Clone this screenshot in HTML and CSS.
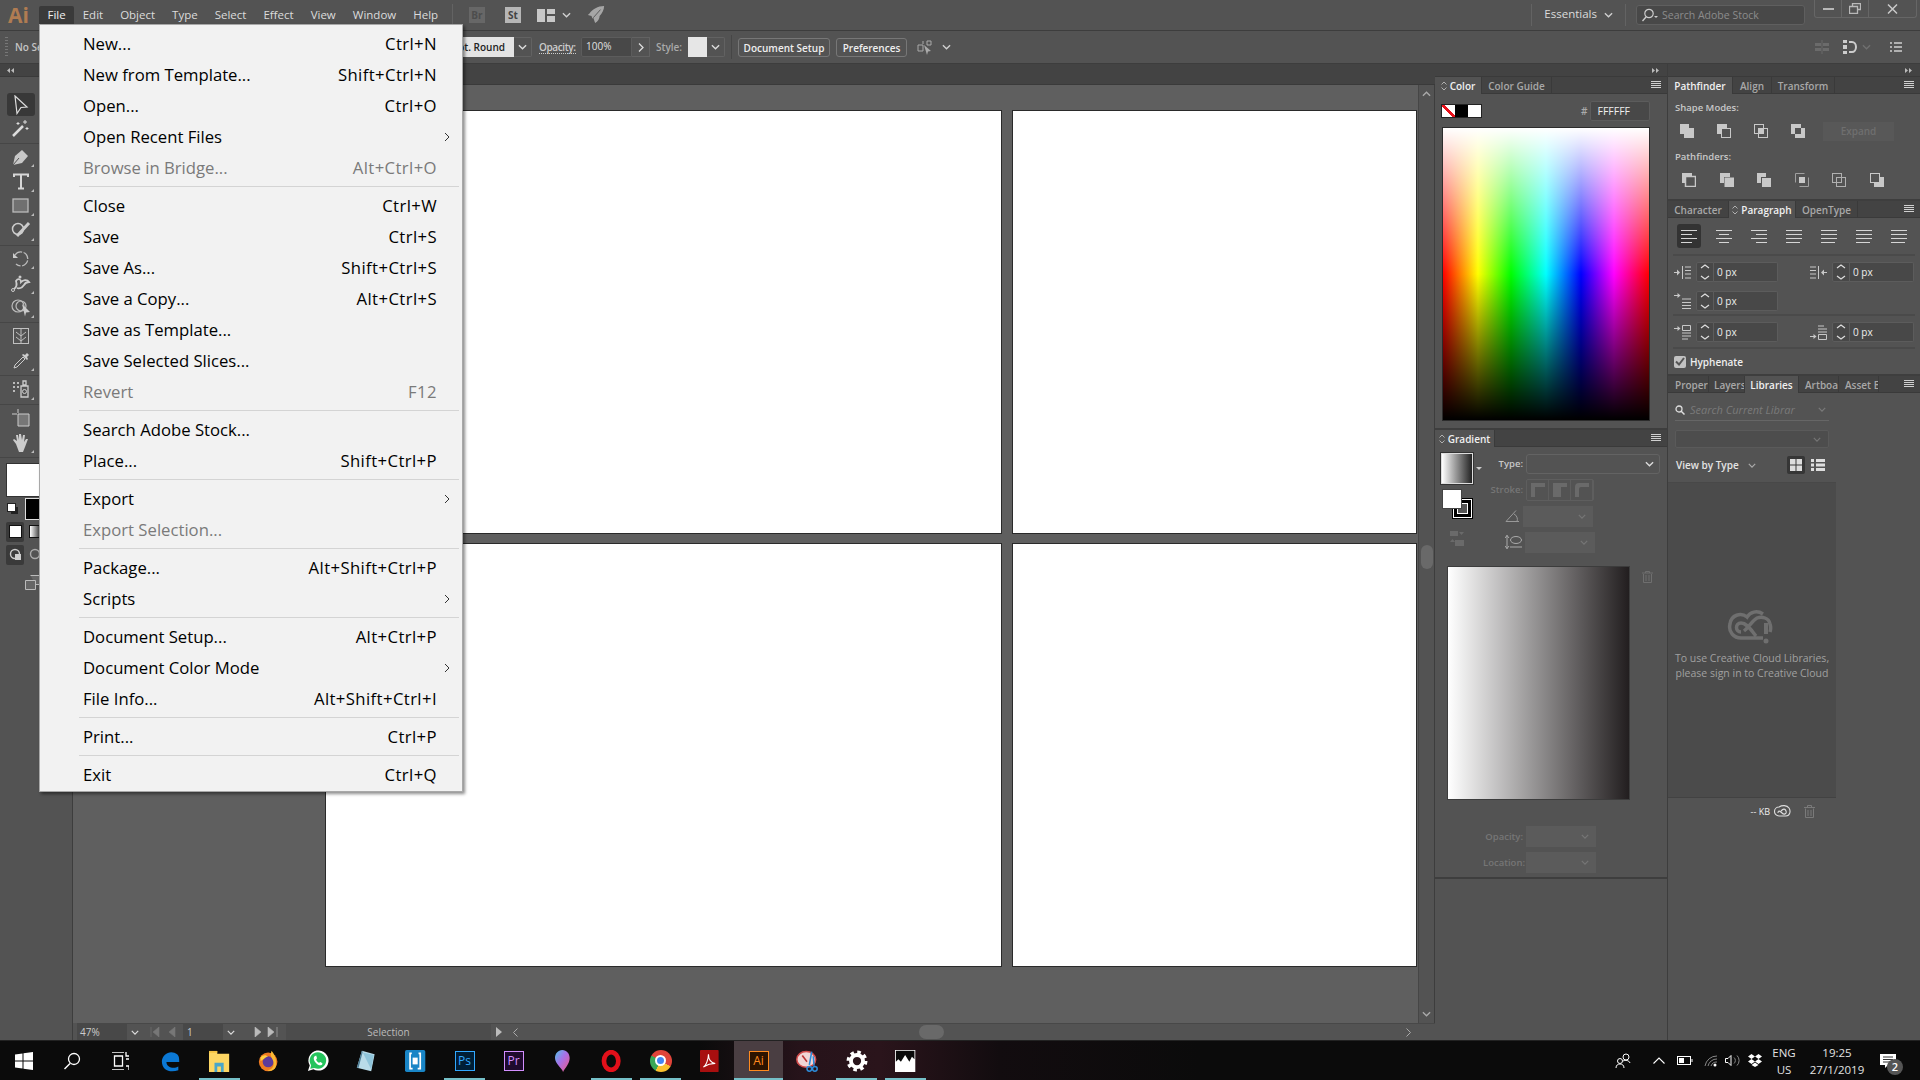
FILE: index.html
```html
<!DOCTYPE HTML>
<html>

<head>
    <meta charset="UTF-8">
    <title>Adobe Illustrator</title>
    <link rel="stylesheet" href="styles.css">
</head>

<body>
    <svg class="defs" width="0" height="0">
        <symbol id="chev" viewBox="0 0 10 6"><path d="M1 1l4 4 4-4" fill="none" stroke="currentColor" stroke-width="1.5"/></symbol>
        <symbol id="burger" viewBox="0 0 10 7"><path d="M0 .5h10M0 2.500h10M0 4.500h10M0 6.500h10" stroke="currentColor"/></symbol>
        <symbol id="updown" viewBox="0 0 6 10"><path d="M.5 3.500L3 1l2.500 2.500M.5 6.500L3 9l2.500-2.500" fill="none" stroke="currentColor"/></symbol>
        <symbol id="left" viewBox="0 0 16 13"><path d="M0 .5h16M0 4.500h11M0 8.500h16M0 12.500h11" stroke="currentColor"/></symbol>
        <symbol id="center" viewBox="0 0 16 13"><path d="M0 .5h16M3 4.500h10M0 8.500h16M3 12.500h10" stroke="currentColor"/></symbol>
        <symbol id="right" viewBox="0 0 16 13"><path d="M0 .5h16M5 4.500h11M0 8.500h16M5 12.500h11" stroke="currentColor"/></symbol>
        <symbol id="just" viewBox="0 0 16 13"><path d="M0 .5h16M0 4.500h16M0 8.500h16M0 12.500h14" stroke="currentColor"/></symbol>
        <symbol id="spin" viewBox="0 0 10 18"><path d="M1 5l4-3 4 3M1 13l4 3 4-3" fill="none" stroke="currentColor" stroke-width="1.2"/></symbol>
    </svg>

    <div class="app">
        <header class="menubar">
            <span class="ai-logo">Ai</span>
            <nav class="menubar__items">
                <span class="menubar__item menubar__item--open">File</span>
                <span class="menubar__item">Edit</span>
                <span class="menubar__item">Object</span>
                <span class="menubar__item">Type</span>
                <span class="menubar__item">Select</span>
                <span class="menubar__item">Effect</span>
                <span class="menubar__item">View</span>
                <span class="menubar__item">Window</span>
                <span class="menubar__item">Help</span>
            </nav>
            <span class="vsep"></span>
            <span class="badge badge--br">Br</span>
            <span class="badge badge--st">St</span>
            <svg class="layout-icon" width="18" height="13" viewBox="0 0 18 13"><path d="M0 0h8v13H0zM10 0h8v5h-8zM10 7h8v6h-8z" fill="#c8c8c8"/></svg>
            <svg class="small-chev" width="9" height="6"><use href="#chev"/></svg>
            <svg class="rocket" width="18" height="20" viewBox="0 0 20 22"><path d="M19 1C12 1 6 5 3 9l-2 2 4 1 1 3 1-1 2 6c3-2 5-5 5-8 3-3 5-7 5-11z" fill="#a6a6a6"/><path d="M7 14l8-9" stroke="#535353"/></svg>
            <span class="menubar__spacer"></span>
            <span class="vsep"></span>
            <span class="workspace">Essentials</span>
            <svg class="small-chev" width="9" height="6"><use href="#chev"/></svg>
            <span class="vsep vsep--ws"></span>
            <div class="stock-search">
                <svg width="18" height="14" viewBox="0 0 18 14"><circle cx="8" cy="5.500" r="4.200" fill="none" stroke="#ccc" stroke-width="1.200"/><path d="M5 9l-3.500 4" stroke="#ccc" stroke-width="1.300"/><path d="M13 8h4l-2 2z" fill="#ccc"/></svg>
                <span>Search Adobe Stock</span>
            </div>
            <div class="winbtns">
                <span class="winbtn"><svg width="11" height="3"><rect width="11" height="2" y="1" fill="#b8b8b8"/></svg></span>
                <span class="winbtn"><svg width="12" height="11" viewBox="0 0 12 11"><path d="M3.500 3V.5h8v6H9M.5 3.500h8v7h-8z" fill="none" stroke="#b8b8b8" stroke-width="1.300"/></svg></span>
                <span class="winbtn winbtn--wide"><svg width="11" height="10" viewBox="0 0 11 10"><path d="M1 .5l9 9M10 .5l-9 9" stroke="#c8c8c8" stroke-width="1.500"/></svg></span>
            </div>
        </header>

        <div class="optionsbar">
            <span class="grip"></span>
            <span class="opt-noselect">No Selection</span>
            <span class="opt-brush">3 pt. Round</span>
            <span class="opt-dd"><svg width="9" height="6"><use href="#chev"/></svg></span>
            <span class="opt-label">Opacity:</span>
            <span class="opt-input">100%</span>
            <span class="opt-arrow">
                <svg width="6" height="9" viewBox="0 0 6 9"><path d="M1 .5l4 4-4 4" fill="none" stroke="#ddd" stroke-width="1.300"/></svg>
            </span>
            <span class="opt-style">Style:</span>
            <span class="opt-swatch"></span>
            <span class="opt-dd opt-dd--style"><svg width="9" height="6"><use href="#chev"/></svg></span>
            <span class="opt-sep"></span>
            <span class="opt-btn opt-btn--setup">Document Setup</span>
            <span class="opt-btn opt-btn--prefs">Preferences</span>
            <svg class="opt-transform" width="18" height="15" viewBox="0 0 18 15"><path d="M6 1v3M10 1h4v4h-4zM1 5h5v6H1z" fill="none" stroke="#aaa"/><path d="M7 5l7 6-3 .5L10 15z" fill="#aaa"/></svg>
            <svg class="small-chev" width="9" height="6"><use href="#chev"/></svg>
            <span class="menubar__spacer"></span>
            <svg class="opt-align" width="14" height="14" viewBox="0 0 14 14"><path d="M0 3h6v3H0zM8 3h6v3H8zM0 8h6v3H0zM8 8h6v3H8z" fill="#6b6b6b"/><path d="M7 0v14" stroke="#6b6b6b"/></svg>
            <svg class="opt-snap" width="14" height="14" viewBox="0 0 14 14"><path d="M0 0h4v3H0zM0 5h4v4H0zM0 11h4v3H0z" fill="#ccc"/><path d="M6 2h3a4 5 0 0 1 0 10H6" fill="none" stroke="#ccc" stroke-width="2"/></svg>
            <svg class="opt-dim" width="9" height="6"><use href="#chev"/></svg>
            <svg class="opt-list" width="12" height="10" viewBox="0 0 12 10"><path d="M0 1h2M4 1h8M0 5h2M4 5h8M0 9h2M4 9h8" stroke="#d0d0d0" stroke-width="1.400"/></svg>
        </div>

        <div class="workspace-row">
            <aside class="toolbar">
                <div class="strip"><svg width="7" height="5" viewBox="0 0 7 5"><path d="M3 0v5L0 2.500zM7 0v5L4 2.500z" fill="#bbb"/></svg></div>
                <div class="tool-group">
                    <div class="tool tool--active"><svg width="16" height="20" viewBox="0 0 16 20"><path d="M2 1l12 11-6 .5-4 6z" fill="none" stroke="#ddd" stroke-width="1.200"/></svg></div>
                    <div class="tool"><svg width="18" height="18" viewBox="0 0 18 18"><path d="M1 17L11 7" stroke="#ddd" stroke-width="2.500"/><path d="M13 1v4M11 3h4M6 3v3M4.500 4.500h3M15 8v3M13.500 9.500h3" stroke="#ddd"/></svg></div>
                </div>
                <div class="tool-group">
                    <div class="tool tool--more"><svg width="18" height="18" viewBox="0 0 18 18"><path d="M1 17l2-9 7-6 6 6-6 7z" fill="#c8c8c8"/><path d="M1 17l6-7" stroke="#535353"/></svg></div>
                    <div class="tool tool--more"><svg width="16" height="17" viewBox="0 0 16 17"><path d="M1 4V1.500h14V4M8 1.500V15.500M5 15.500h6" fill="none" stroke="#d6d6d6" stroke-width="2"/></svg></div>
                    <div class="tool tool--more"><svg width="17" height="15" viewBox="0 0 17 15"><rect x="1" y="1" width="15" height="13" fill="#707070" stroke="#bbb" stroke-width="1.300"/></svg></div>
                    <div class="tool tool--more"><svg width="20" height="18" viewBox="0 0 20 18"><circle cx="7" cy="8" r="5.500" fill="none" stroke="#ccc" stroke-width="1.500"/><path d="M6 15L18 2" stroke="#ccc" stroke-width="3"/></svg></div>
                </div>
                <div class="tool-group">
                    <div class="tool tool--more"><svg width="18" height="18" viewBox="0 0 18 18"><path d="M3 5a7 7 0 1 1 1 9" fill="none" stroke="#bbb" stroke-dasharray="8 1.500" stroke-width="1.300"/><path d="M1 3v5h5z" fill="#ccc"/></svg></div>
                    <div class="tool tool--more"><svg width="20" height="18" viewBox="0 0 20 18"><path d="M3 15c3-2 3-5 2-8 2-3 5-2 5 1 2-2 6-3 8 0-2 0-4 1-5 3-2 3-5 4-7 3" fill="none" stroke="#ccc" stroke-width="1.800"/><circle cx="2" cy="16" r="1.500" fill="none" stroke="#ccc"/><circle cx="9" cy="3" r="1.500" fill="#ccc"/></svg></div>
                    <div class="tool tool--more"><svg width="20" height="20" viewBox="0 0 20 20"><ellipse cx="7" cy="8" rx="6" ry="6" fill="none" stroke="#bbb" stroke-width="1.200"/><ellipse cx="10" cy="8" rx="5" ry="5" fill="none" stroke="#bbb" stroke-width="1.200"/><path d="M11 6l8 8-4 .5-1 4z" fill="#ccc"/></svg></div>
                </div>
                <div class="tool-group">
                    <div class="tool"><svg width="16" height="16" viewBox="0 0 16 16"><rect x=".5" y=".5" width="15" height="15" fill="none" stroke="#c0c0c0"/><path d="M8 1v14M8 8l5-4M8 8L3 4M8 13l5-4M8 13L3 9" stroke="#c0c0c0"/></svg></div>
                    <div class="tool tool--more"><svg width="18" height="18" viewBox="0 0 18 18"><path d="M2 16l1-3L11 5l2 2-8 8z" fill="none" stroke="#ccc"/><path d="M10 3l5 5 1-1-1-2 2-2-2-2-2 2-2-1z" fill="#ccc"/></svg></div>
                </div>
                <div class="tool-group">
                    <div class="tool tool--more"><svg width="18" height="18" viewBox="0 0 18 18"><path d="M1 2h2v2H1zM5 2h2v2H5zM1 6h2v2H1zM5 6h2v2H5zM1 10h2v2H1z" fill="#bbb"/><path d="M9 6h7v11H9zM11 1h3v4h-3z" fill="none" stroke="#ccc" stroke-width="1.300"/><circle cx="12.500" cy="11.500" r="2" fill="none" stroke="#ccc"/></svg></div>
                </div>
                <div class="tool-group">
                    <div class="tool tool--artboard"><svg width="18" height="18" viewBox="0 0 18 18"><path d="M6 5h11v12H6z" fill="#777" stroke="#ccc"/><path d="M0 5h5M6 0v4" stroke="#ccc"/></svg></div>
                    <div class="tool tool--more"><svg width="18" height="19" viewBox="0 0 18 19"><path d="M4 11L1 7l1-1 3 2-1-6h2l1 5V1h2l1 6 1-5h2l-1 7 2-3h2l-3 8-2 5H7z" fill="#ccc"/></svg></div>
                </div>
                <div class="fillstroke">
                    <span class="fill-box"></span>
                    <span class="stroke-box"></span>
                    <span class="default-fs"></span>
                </div>
                <div class="mode-row">
                    <span class="mode-cell mode-cell--on"><i class="mode-white"></i></span>
                    <span class="mode-cell"><i class="mode-grad"></i></span>
                </div>
                <div class="mode-row">
                    <span class="mode-cell mode-cell--on"><svg width="13" height="13" viewBox="0 0 13 13"><circle cx="6" cy="6" r="4.500" fill="none" stroke="#ccc" stroke-width="1.400"/><rect x="6" y="6" width="6" height="6" fill="#ccc"/></svg></span>
                    <span class="mode-cell"><svg width="13" height="13" viewBox="0 0 13 13"><circle cx="6" cy="6" r="4.500" fill="none" stroke="#aaa" stroke-width="1.400"/></svg></span>
                </div>
                <div class="screen-mode">
                    <svg width="16" height="15" viewBox="0 0 16 15"><path d="M.5 5.500h10v9H.5zM5.500.5h10v9h-5" fill="#666" stroke="#bbb"/></svg>
                </div>
            </aside>

            <main class="document">
                <div class="doc-tabs"></div>
                <div class="doc-mid">
                    <div class="canvas">
                        <div class="artboards">
                            <div class="artboard"></div>
                            <div class="artboard"></div>
                            <div class="artboard"></div>
                            <div class="artboard"></div>
                        </div>
                    </div>
                    <div class="vscroll">
                        <svg width="9" height="6" class="vscroll__up"><use href="#chev"/></svg>
                        <span class="vscroll__thumb"></span>
                        <svg width="9" height="6"><use href="#chev"/></svg>
                    </div>
                </div>
                <div class="statusbar">
                    <span class="st-zoom">47%</span>
                    <span class="st-dd"><svg width="8" height="5"><use href="#chev"/></svg></span>
                    <svg class="st-nav st-nav--dim" width="30" height="10" viewBox="0 0 30 10"><path d="M1 0v10M9 0v10L3 5zM25 0v10l-6-5z" fill="#777" stroke="#777" stroke-width=".6"/></svg>
                    <span class="st-page">1</span>
                    <span class="st-dd"><svg width="8" height="5"><use href="#chev"/></svg></span>
                    <svg class="st-nav" width="30" height="10" viewBox="0 0 30 10"><path d="M6 0v10l6-5zM19 0v10l6-5zM28 0v10" fill="#bbb" stroke="#bbb" stroke-width=".6"/></svg>
                    <span class="st-label">Selection</span>
                    <svg class="st-play" width="6" height="10" viewBox="0 0 6 10"><path d="M0 0v10l6-5z" fill="#bbb"/></svg>
                    <svg class="st-back" width="5" height="9" viewBox="0 0 5 9"><path d="M4.500.5l-4 4 4 4" fill="none" stroke="#aaa"/></svg>
                    <div class="hscroll"><span class="hscroll__thumb"></span></div>
                    <svg class="st-fwd" width="5" height="9" viewBox="0 0 5 9"><path d="M.5.500l4 4-4 4" fill="none" stroke="#aaa"/></svg>
                </div>
            </main>

            <section class="dock dock--left">
                <div class="strip strip--right"><svg width="7" height="5" viewBox="0 0 7 5"><path d="M0 0v5l3-2.500zM4 0v5l3-2.500z" fill="#bbb"/></svg></div>
                <div class="panel panel--color">
                    <div class="tabs">
                        <span class="tab tab--on tab--color"><svg class="tab__updown" width="6" height="10"><use href="#updown"/></svg>Color</span>
                        <span class="tab tab--guide">Color Guide</span>
                        <svg class="tabs__menu" width="10" height="7"><use href="#burger"/></svg>
                    </div>
                    <div class="color-top">
                        <span class="swatch-set">
                            <i class="sw sw--none"></i><i class="sw sw--black"></i><i class="sw sw--white"></i>
                        </span>
                        <span class="hash">#</span>
                        <span class="hex">FFFFFF</span>
                    </div>
                    <div class="spectrum"></div>
                </div>
                <div class="panel panel--gradient">
                    <div class="tabs">
                        <span class="tab tab--on tab--gradient"><svg class="tab__updown" width="6" height="10"><use href="#updown"/></svg>Gradient</span>
                        <svg class="tabs__menu" width="10" height="7"><use href="#burger"/></svg>
                    </div>
                    <div class="grad-top">
                        <div class="grad-left">
                            <div class="grad-preview-row">
                                <span class="grad-preview"></span>
                                <i class="grad-caret"></i>
                            </div>
                            <div class="grad-fs">
                                <span class="grad-fs__stroke"></span>
                                <span class="grad-fs__fill"></span>
                            </div>
                            <svg class="grad-swap" width="16" height="15" viewBox="0 0 16 15"><path d="M1 0h8v5H1zM6 9h9v6H6z" fill="#6a6a6a"/><path d="M10 1h5l-2.500 3zM1 11h5L3.500 8z" fill="#6a6a6a"/></svg>
                        </div>
                        <div class="grad-form">
                            <div class="grad-row grad-row--type">
                                <label class="grad-label grad-label--on">Type:</label>
                                <span class="grad-select"><svg width="9" height="6"><use href="#chev"/></svg></span>
                            </div>
                            <div class="grad-row grad-row--stroke">
                                <label class="grad-label">Stroke:</label>
                                <span class="grad-strokes">
                                    <i><svg width="14" height="14" viewBox="0 0 14 14"><path d="M0 14V0h14v4H4v10z" fill="#6a6a6a"/></svg></i>
                                    <i><svg width="14" height="14" viewBox="0 0 14 14"><path d="M0 14V0h14v4H8v10z" fill="#6a6a6a"/></svg></i>
                                    <i><svg width="14" height="14" viewBox="0 0 14 14"><path d="M0 14V4a4 4 0 0 1 4-4h10v4H6a2 2 0 0 0-2 2v8z" fill="#6a6a6a"/></svg></i>
                                </span>
                            </div>
                            <div class="grad-row">
                                <svg class="grad-ico" width="15" height="12" viewBox="0 0 15 12"><path d="M1 11.500h13M1 11.500L11 .5M9 4a6 6 0 0 1 3 7.500" fill="none" stroke="#999"/></svg>
                                <span class="grad-field"><svg width="8" height="5"><use href="#chev"/></svg></span>
                            </div>
                            <div class="grad-row">
                                <svg class="grad-ico" width="17" height="14" viewBox="0 0 17 14"><ellipse cx="11" cy="5" rx="5.500" ry="3.500" fill="none" stroke="#aaa"/><path d="M2 0v14M5 12h12M0 3l2-2.500L4 3M0 11l2 2.500L4 11" fill="none" stroke="#aaa"/></svg>
                                <span class="grad-field"><svg width="8" height="5"><use href="#chev"/></svg></span>
                            </div>
                        </div>
                    </div>
                    <div class="ramp-row">
                        <div class="ramp"></div>
                        <svg class="ramp-trash" width="11" height="12" viewBox="0 0 11 12"><path d="M0 2h11M3.500 2V.5h4V2M1.500 3v8.500h8V3M4 4v6M7 4v6" fill="none" stroke="#6f6f6f"/></svg>
                    </div>
                    <div class="grad-bottom">
                        <div class="grad-row">
                            <label class="grad-label">Opacity:</label>
                            <span class="grad-field"><svg width="8" height="5"><use href="#chev"/></svg></span>
                        </div>
                        <div class="grad-row">
                            <label class="grad-label">Location:</label>
                            <span class="grad-field"><svg width="8" height="5"><use href="#chev"/></svg></span>
                        </div>
                    </div>
                </div>
            </section>

            <section class="dock dock--right">
                <div class="strip strip--right"><svg width="7" height="5" viewBox="0 0 7 5"><path d="M0 0v5l3-2.500zM4 0v5l3-2.500z" fill="#bbb"/></svg></div>
                <div class="panel panel--path">
                    <div class="tabs">
                        <span class="tab tab--on tab--pf">Pathfinder</span>
                        <span class="tab tab--al">Align</span>
                        <span class="tab tab--tr">Transform</span>
                        <svg class="tabs__menu" width="10" height="7"><use href="#burger"/></svg>
                    </div>
                    <div class="path-title">Shape Modes:</div>
                    <div class="path-icons path-icons--shape">
                        <svg width="14" height="14" viewBox="0 0 14 14"><path d="M0 0h9v4h5v10H4v-4H0z" fill="#c8c8c8"/></svg>
                        <svg width="14" height="14" viewBox="0 0 14 14"><path d="M0 0h10v4H4v6H0z" fill="#c8c8c8"/><rect x="4.500" y="4.500" width="9" height="9" fill="none" stroke="#c8c8c8"/></svg>
                        <svg width="14" height="14" viewBox="0 0 14 14"><rect x=".5" y=".5" width="9" height="9" fill="none" stroke="#c8c8c8"/><rect x="4.500" y="4.500" width="9" height="9" fill="none" stroke="#c8c8c8"/><rect x="4" y="4" width="6" height="6" fill="#c8c8c8"/></svg>
                        <svg width="14" height="14" viewBox="0 0 14 14"><path d="M0 0h10v4H4v6H0zM10 4h4v10H4v-4h6z" fill="#c8c8c8"/></svg>
                        <span class="expand">Expand</span>
                    </div>
                    <div class="path-title path-title--two">Pathfinders:</div>
                    <div class="path-icons path-icons--finders">
                        <svg width="14" height="14" viewBox="0 0 14 14"><path d="M0 0h10v3H3v7H0z" fill="#c8c8c8"/><rect x="3.500" y="3.500" width="10" height="10" fill="none" stroke="#c8c8c8" stroke-width="1.500"/></svg>
                        <svg width="14" height="14" viewBox="0 0 14 14"><path d="M0 0h10v4H4v6H0z" fill="#c8c8c8"/><rect x="4.500" y="4.500" width="9.500" height="9.500" fill="#c8c8c8"/></svg>
                        <svg width="14" height="14" viewBox="0 0 14 14"><path d="M0 0h9v4H4v6H0zM5 5h9v9H5z" fill="#c8c8c8"/></svg>
                        <svg width="14" height="14" viewBox="0 0 14 14"><path d="M.5 9.500V.5h9M13.500 4.500v9h-9" fill="none" stroke="#a0a0a0"/><rect x="4" y="4" width="6" height="6" fill="#c8c8c8"/></svg>
                        <svg width="14" height="14" viewBox="0 0 14 14"><rect x=".5" y=".5" width="9" height="9" fill="none" stroke="#b0b0b0"/><rect x="4.500" y="4.500" width="9" height="9" fill="none" stroke="#b0b0b0"/></svg>
                        <svg width="14" height="14" viewBox="0 0 14 14"><rect x=".5" y=".5" width="9" height="9" fill="#535353" stroke="#c8c8c8"/><path d="M10 4h4v10H4v-4h6z" fill="#c8c8c8"/></svg>
                    </div>
                </div>
                <div class="panel panel--para">
                    <div class="tabs">
                        <span class="tab tab--ch">Character</span>
                        <span class="tab tab--on tab--pa"><svg class="tab__updown" width="6" height="10"><use href="#updown"/></svg>Paragraph</span>
                        <span class="tab tab--ot">OpenType</span>
                        <svg class="tabs__menu" width="10" height="7"><use href="#burger"/></svg>
                    </div>
                    <div class="aligns">
                        <span class="align align--on"><svg width="16" height="13"><use href="#left"/></svg></span>
                        <span class="align"><svg width="16" height="13"><use href="#center"/></svg></span>
                        <span class="align"><svg width="16" height="13"><use href="#right"/></svg></span>
                        <span class="align"><svg width="16" height="13"><use href="#just"/></svg></span>
                        <span class="align"><svg width="16" height="13"><use href="#just"/></svg></span>
                        <span class="align"><svg width="16" height="13"><use href="#just"/></svg></span>
                        <span class="align"><svg width="16" height="13"><use href="#just"/></svg></span>
                    </div>
                    <div class="para-fields para-fields--indent">
                        <div class="pfield">
                            <svg class="pfield__ico" width="17" height="13" viewBox="0 0 17 13"><path d="M0 6.500h5M8.500 0v13M11 1h6M11 4.500h6M11 8h6M11 12h6" fill="none" stroke="#c8c8c8"/><path d="M3 3.500l3 3-3 3z" fill="#c8c8c8"/></svg>
                            <span class="spinner"><svg width="10" height="18"><use href="#spin"/></svg></span>
                            <span class="pfield__val">0 px</span>
                        </div>
                        <div class="pfield">
                            <svg class="pfield__ico" width="17" height="13" viewBox="0 0 17 13"><path d="M0 1h6M0 4.500h6M0 8h6M0 12h6M8.500 0v13M12 6.500h5" fill="none" stroke="#c8c8c8"/><path d="M14 3.500l-3 3 3 3z" fill="#c8c8c8"/></svg>
                            <span class="spinner"><svg width="10" height="18"><use href="#spin"/></svg></span>
                            <span class="pfield__val">0 px</span>
                        </div>
                        <div class="pfield">
                            <svg class="pfield__ico" width="17" height="16" viewBox="0 0 17 16"><path d="M0 2.500h5M8 6h9M8 9.500h9M8 12.500h9M8 15.500h9" fill="none" stroke="#c8c8c8"/><path d="M3.500 0l3 2.500-3 2.500z" fill="#c8c8c8"/></svg>
                            <span class="spinner"><svg width="10" height="18"><use href="#spin"/></svg></span>
                            <span class="pfield__val">0 px</span>
                        </div>
                    </div>
                    <div class="para-fields para-fields--space">
                        <div class="pfield">
                            <svg class="pfield__ico" width="17" height="15" viewBox="0 0 17 15"><path d="M0 3.500h5M8.500.5h8v5h-8zM8 8h9M8 11h9M8 14h6" fill="none" stroke="#c8c8c8"/><path d="M3.500 1l3 2.500-3 2.500z" fill="#c8c8c8"/></svg>
                            <span class="spinner"><svg width="10" height="18"><use href="#spin"/></svg></span>
                            <span class="pfield__val">0 px</span>
                        </div>
                        <div class="pfield">
                            <svg class="pfield__ico" width="17" height="15" viewBox="0 0 17 15"><path d="M8 1h6M8 4h9M8 7h9M0 11.500h5M8.500 9.500h8v5h-8z" fill="none" stroke="#c8c8c8"/><path d="M3.500 9l3 2.500-3 2.500z" fill="#c8c8c8"/></svg>
                            <span class="spinner"><svg width="10" height="18"><use href="#spin"/></svg></span>
                            <span class="pfield__val">0 px</span>
                        </div>
                    </div>
                    <div class="hyphenate">
                        <span class="checkbox"><svg width="10" height="9" viewBox="0 0 10 9"><path d="M1 4.500l3 3 5-6.500" fill="none" stroke="#555" stroke-width="2"/></svg></span>
                        Hyphenate
                    </div>
                </div>
                <div class="panel panel--lib">
                    <div class="tabs">
                        <span class="tab tab--pr">Proper</span>
                        <span class="tab tab--ly">Layers</span>
                        <span class="tab tab--on tab--li">Libraries</span>
                        <span class="tab tab--ab">Artboa</span>
                        <span class="tab tab--as">Asset E</span>
                        <svg class="tabs__menu" width="10" height="7"><use href="#burger"/></svg>
                    </div>
                    <div class="lib">
                        <div class="lib-search">
                            <svg width="10" height="10" viewBox="0 0 10 10"><circle cx="4" cy="4" r="3" fill="none" stroke="#ddd" stroke-width="1.300"/><path d="M6 6l3.500 3.500" stroke="#ddd" stroke-width="1.500"/></svg>
                            <span>Search Current Librar</span>
                            <svg width="8" height="5"><use href="#chev"/></svg>
                        </div>
                        <div class="lib-select"><svg width="8" height="5"><use href="#chev"/></svg></div>
                        <div class="lib-view">
                            <span class="lib-view__label">View by Type</span>
                            <svg class="lib-view__chev" width="8" height="5"><use href="#chev"/></svg>
                            <span class="lib-view__grid"><svg width="12" height="12" viewBox="0 0 12 12"><path d="M0 0h5.500v5.500H0zM6.500 0H12v5.500H6.500zM0 6.500h5.500V12H0zM6.500 6.500H12V12H6.500z" fill="#ddd"/></svg></span>
                            <svg width="14" height="12" viewBox="0 0 14 12"><path d="M0 0h3v3H0zM0 4.500h3v3H0zM0 9h3v3H0zM5 0h9v3H5zM5 4.500h9v3H5zM5 9h9v3H5z" fill="#ddd"/></svg>
                        </div>
                        <div class="lib-body">
                            <svg class="lib-cloud" width="50" height="36" viewBox="0 0 50 36"><path d="M36 4C30 0 23 2 20 7 14 2 4 5 3 14c-2 8 4 14 11 14h22M14 22c-6 0-6-9 0-9 6 0 10 7 15 13M17 21c5-4 8-10 13-13 5-2 12 0 13 6 1 3 1 5 0 8" fill="none" stroke="#6f6f6f" stroke-width="3.500"/><path d="M39 13v11" stroke="#6f6f6f" stroke-width="4"/><circle cx="39" cy="31" r="2.500" fill="#6f6f6f"/></svg>
                            <p class="lib-msg">To use Creative Cloud Libraries,<br>please sign in to Creative Cloud</p>
                        </div>
                        <div class="lib-foot">
                            <span>-- KB</span>
                            <svg width="17" height="12" viewBox="0 0 17 12"><path d="M5 11a4.500 4.500 0 0 1 0-9c3-2 8-2 10 1 2 3 1 8-3 8zM4 8c0-3 2-2 4 0s5 1 4-2-3-2-5 0" fill="none" stroke="#ddd" stroke-width="1.100"/></svg>
                            <svg class="lib-trash" width="11" height="13" viewBox="0 0 11 13"><path d="M0 2.500h11M3.500 2.500V.5h4v2M1.500 3.500v9h8v-9M4 5v6M7 5v6" fill="none" stroke="#7a7a7a"/></svg>
                        </div>
                    </div>
                </div>
            </section>
        </div>

        <footer class="taskbar">
            <span class="tb tb--sys"><svg width="18" height="18" viewBox="0 0 18 18"><path d="M0 2.500L7.500 1.500V8.500H0zM8.500 1.300L18 0V8.500H8.500zM0 9.500H7.500V16.500L0 15.500zM8.500 9.500H18V18L8.500 16.700z" fill="#fff"/></svg></span>
            <span class="tb tb--sys"><svg width="18" height="18" viewBox="0 0 18 18"><circle cx="11" cy="7" r="5.500" fill="none" stroke="#fff" stroke-width="1.300"/><path d="M7 11.500L1.500 17" stroke="#fff" stroke-width="1.500"/></svg></span>
            <span class="tb tb--sys"><svg width="18" height="18" viewBox="0 0 18 18"><path d="M1 0h12M1 18h12M3.500 4h8v10h-8zM15 0v4h3M15 7h3M15 14h3v4" fill="none" stroke="#fff" stroke-width="1.300"/></svg></span>
            <span class="tb tb--first"><svg width="22" height="24" viewBox="0 0 22 24"><path d="M2 12C3 4 12-1 19 5c2 2 2 5 2 8H7c0 6 8 8 13 5v4c-8 3-18 1-18-10z" fill="#0b78d4"/></svg></span>
            <span class="tb tb--run"><svg width="22" height="24" viewBox="0 0 22 24"><path d="M0 1h9v3h13v20H0z" fill="#fdd663"/><path d="M0 1h9v2H0z" fill="#f5c342"/><path d="M6 14h10v10h-3v-6H9v6H6z" fill="#4aa6c9"/></svg></span>
            <span class="tb"><svg width="24" height="26" viewBox="0 0 24 26"><circle cx="12" cy="14" r="11" fill="#ef7a21"/><circle cx="12" cy="14" r="6.500" fill="#5d3a9b"/><path d="M16 1c6 7 6 15 5 19-2 4-7 6-10 4 5 0 9-5 7-11-1-3-3-5-3-8z" fill="#fbb934"/><path d="M3 9c3-4 7-3 9-1-4 0-4 3-9 5z" fill="#ffcf3f"/></svg></span>
            <span class="tb"><svg width="24" height="24" viewBox="0 0 24 24"><path d="M1 23l2-6A11 11 0 1 1 7 21z" fill="#fff"/><path d="M3.500 20.500l1-4A9 9 0 1 1 8 19.500z" fill="#25c45c"/><path d="M8 7c-2 3 1 7 4 9 2 1 4 1 5-1l-2-2-2 1c-1-1-3-2-3-4l1-1-1-3z" fill="#fff"/></svg></span>
            <span class="tb"><svg width="24" height="26" viewBox="0 0 24 26"><path d="M7 1l15 4-4 20L1 21z" fill="#b9dbe9"/><path d="M1 21L7 1l1 1-5 19z" fill="#4b7b93"/><path d="M8 3l13 3-3 17z" fill="#8fc4da"/></svg></span>
            <span class="tb"><svg width="24" height="26" viewBox="0 0 24 26"><rect width="24" height="26" rx="2" fill="#1985c6"/><path d="M8 4H6v18h3M16 4h2v18h-3" fill="none" stroke="#fff" stroke-width="2"/><rect x="9" y="9" width="6" height="8" fill="#fff"/></svg></span>
            <span class="tb tb--run"><span class="app-sq app-sq--ps">Ps</span></span>
            <span class="tb"><span class="app-sq app-sq--pr">Pr</span></span>
            <span class="tb"><svg width="20" height="30" viewBox="0 0 20 30"><defs><linearGradient id="pin" x1="0" y1="0" x2="1" y2="1"><stop offset="0" stop-color="#4fc3e8"/><stop offset=".45" stop-color="#a870e8"/><stop offset="1" stop-color="#f0577e"/></linearGradient></defs><path d="M10 0c6 0 10 5 10 11 0 8-6 13-9 19-2-6-11-11-11-19C0 5 4 0 10 0z" fill="url(#pin)"/></svg></span>
            <span class="tb tb--run"><svg width="24" height="26" viewBox="0 0 24 26"><ellipse cx="12" cy="13" rx="8.500" ry="10.500" fill="none" stroke="#e3101a" stroke-width="5.500"/></svg></span>
            <span class="tb tb--run"><span class="chrome"><i></i></span></span>
            <span class="tb"><svg width="22" height="26" viewBox="0 0 22 26"><rect width="22" height="26" rx="1" fill="#a80f0f"/><path d="M4 20c3-1 6-9 6-15 0 6 3 10 8 11-5 0-9 1-14 4z" fill="none" stroke="#fff" stroke-width="1.300"/></svg></span>
            <span class="tb tb--active"><span class="app-sq app-sq--ai">Ai</span></span>
            <span class="tb"><svg width="30" height="28" viewBox="0 0 30 28"><ellipse cx="13" cy="12" rx="12" ry="10" fill="#f1d5d5" stroke="#d24b4b" stroke-width="2"/><path d="M8 7l6 8" stroke="#b33" stroke-width="2"/><path d="M20 2l-3 17M22 8l1 12" stroke="#2c8bd8" stroke-width="2"/><circle cx="17" cy="24" r="3" fill="none" stroke="#2c8bd8" stroke-width="2"/><circle cx="24" cy="24" r="3" fill="none" stroke="#2c8bd8" stroke-width="2"/></svg></span>
            <span class="tb tb--run"><svg width="20" height="20" viewBox="0 0 20 20"><circle cx="10" cy="10" r="5.500" fill="none" stroke="#fff" stroke-width="3.500"/><circle cx="10" cy="10" r="8" fill="none" stroke="#fff" stroke-width="3" stroke-dasharray="3.200 3.080"/></svg></span>
            <span class="tb tb--run"><svg width="24" height="26" viewBox="0 0 24 26"><path d="M0 0h24v26H0z" fill="#fff"/><path d="M1 1h22v10l-3-3-3 6-5-8-5 8-3-3-3 3z" fill="#0a0a0a"/></svg></span>

            <span class="tb__spacer"></span>

            <div class="tray">
                <svg class="tray__people" width="16" height="16" viewBox="0 0 16 16"><circle cx="11" cy="4" r="3" fill="none" stroke="#fff"/><circle cx="5" cy="8" r="2.500" fill="none" stroke="#fff"/><path d="M1 15c0-3 2-4 4-4s4 1 4 4M8 8c2-1 6-1 7 2" fill="none" stroke="#fff"/></svg>
                <svg class="tray__up" width="12" height="7" viewBox="0 0 12 7"><path d="M.5 6.500L6 1l5.500 5.500" fill="none" stroke="#fff" stroke-width="1.100"/></svg>
                <svg class="tray__batt" width="16" height="9" viewBox="0 0 16 9"><rect x=".5" y=".5" width="13" height="8" fill="none" stroke="#fff"/><rect x="2" y="2" width="5" height="5" fill="#fff"/><path d="M15 3v3" stroke="#fff"/></svg>
                <svg class="tray__wifi" width="14" height="12" viewBox="0 0 14 12"><path d="M1 11a12 12 0 0 1 12-10M4 11a9 9 0 0 1 9-7M7 11a6 6 0 0 1 6-4" fill="none" stroke="#888"/><circle cx="11" cy="10" r="1.500" fill="#fff"/></svg>
                <svg class="tray__vol" width="16" height="13" viewBox="0 0 16 13"><path d="M.5 4.500H3L6 1.500v10l-3-3H.5z" fill="none" stroke="#fff"/><path d="M9 3.500a4 4 0 0 1 0 6M12 1.500a7 7 0 0 1 0 10" fill="none" stroke="#888"/></svg>
                <svg class="tray__drop" width="14" height="13" viewBox="0 0 14 13"><path d="M3.500 0L7 2.500 3.500 5 0 2.500zM10.500 0L14 2.500 10.500 5 7 2.500zM3.500 5L7 7.500 3.500 10 0 7.500zM10.500 5L14 7.500 10.500 10 7 7.500zM3.500 11L7 8.500l3.500 2.500L7 13z" fill="#fff"/></svg>
                <div class="tray__lang">ENG<br>US</div>
                <div class="tray__clock">19:25<br>27/1/2019</div>
                <div class="tray__note">
                    <svg width="16" height="14" viewBox="0 0 16 14"><path d="M0 0h16v11H8l-3 3v-3H0z" fill="#fff"/><path d="M3 3h10M3 5.500h10M3 8h7" stroke="#333"/></svg>
                    <span class="tray__badge">2</span>
                </div>
            </div>
        </footer>
    </div>

    <!-- File menu, open over the toolbar and the first artboards -->
    <div class="file-menu">
        <div class="mi"><span>New...</span><span class="mi__key">Ctrl+N</span></div>
        <div class="mi"><span>New from Template...</span><span class="mi__key">Shift+Ctrl+N</span></div>
        <div class="mi"><span>Open...</span><span class="mi__key">Ctrl+O</span></div>
        <div class="mi"><span>Open Recent Files</span><svg class="mi__arrow" width="6" height="10" viewBox="0 0 6 10"><path d="M1 1l4 4-4 4" fill="none" stroke="#333"/></svg></div>
        <div class="mi mi--off"><span>Browse in Bridge...</span><span class="mi__key">Alt+Ctrl+O</span></div>
        <hr class="msep">
        <div class="mi"><span>Close</span><span class="mi__key">Ctrl+W</span></div>
        <div class="mi"><span>Save</span><span class="mi__key">Ctrl+S</span></div>
        <div class="mi"><span>Save As...</span><span class="mi__key">Shift+Ctrl+S</span></div>
        <div class="mi"><span>Save a Copy...</span><span class="mi__key">Alt+Ctrl+S</span></div>
        <div class="mi"><span>Save as Template...</span></div>
        <div class="mi"><span>Save Selected Slices...</span></div>
        <div class="mi mi--off"><span>Revert</span><span class="mi__key">F12</span></div>
        <hr class="msep">
        <div class="mi"><span>Search Adobe Stock...</span></div>
        <div class="mi"><span>Place...</span><span class="mi__key">Shift+Ctrl+P</span></div>
        <hr class="msep">
        <div class="mi"><span>Export</span><svg class="mi__arrow" width="6" height="10" viewBox="0 0 6 10"><path d="M1 1l4 4-4 4" fill="none" stroke="#333"/></svg></div>
        <div class="mi mi--off"><span>Export Selection...</span></div>
        <hr class="msep">
        <div class="mi"><span>Package...</span><span class="mi__key">Alt+Shift+Ctrl+P</span></div>
        <div class="mi"><span>Scripts</span><svg class="mi__arrow" width="6" height="10" viewBox="0 0 6 10"><path d="M1 1l4 4-4 4" fill="none" stroke="#333"/></svg></div>
        <hr class="msep">
        <div class="mi"><span>Document Setup...</span><span class="mi__key">Alt+Ctrl+P</span></div>
        <div class="mi"><span>Document Color Mode</span><svg class="mi__arrow" width="6" height="10" viewBox="0 0 6 10"><path d="M1 1l4 4-4 4" fill="none" stroke="#333"/></svg></div>
        <div class="mi"><span>File Info...</span><span class="mi__key">Alt+Shift+Ctrl+I</span></div>
        <hr class="msep">
        <div class="mi"><span>Print...</span><span class="mi__key">Ctrl+P</span></div>
        <hr class="msep">
        <div class="mi"><span>Exit</span><span class="mi__key">Ctrl+Q</span></div>
    </div>
</body>

</html>
```

FILE: styles.css
```css
* {
    box-sizing: border-box;
}

html,
body {
    margin: 0;
    height: 100%;
    overflow: hidden;
}

body {
    font-family: "Open Sans", "Noto Sans", sans-serif;
    font-size: 10px;
    color: #ddd;
    background: #535353;
}

.defs {
    display: none;
}

svg {
    display: block;
    flex: none;
}

i {
    display: block;
    font-style: normal;
}

.app {
    width: 1920px;
    height: 1080px;
    display: flex;
    flex-direction: column;
}

/* top menu bar */

.menubar {
    height: 31px;
    display: flex;
    align-items: center;
    background: #535353;
    border-bottom: 1px solid #3d3d3d;
    color: #dcdcdc;
}

.ai-logo {
    width: 39px;
    padding-left: 8px;
    font-size: 21px;
    font-weight: 700;
    color: #b07c52;
    line-height: 24px;
}

.menubar__items {
    display: flex;
    height: 18px;
    margin-right: 9px;
    width: 404px;
}

.menubar__item {
    padding: 0 8.5px;
    font-size: 11.500px;
    line-height: 18px;
}

.menubar__item--open {
    background: #3a3a3a;
    border-radius: 2px 2px 0 0;
    color: #f0f0f0;
}

.vsep {
    width: 1px;
    height: 22px;
    background: #636363;
}

.vsep--ws {
    margin-left: 12px;
}

.badge {
    width: 16px;
    height: 16px;
    font-size: 10px;
    font-weight: 700;
    line-height: 16px;
    text-align: center;
}

.badge--br {
    margin-left: 16px;
    background: #676767;
    color: #4d4d4d;
}

.badge--st {
    margin-left: 20px;
    background: #b6b6b6;
    color: #444;
}

.layout-icon {
    margin-left: 16px;
}

.small-chev {
    margin-left: 7px;
    color: #d0d0d0;
}

.rocket {
    margin-left: 16px;
}

.menubar__spacer {
    flex: 1;
}

.workspace {
    margin: 0 0 3px 12px;
    font-size: 11.500px;
}

.stock-search {
    width: 169px;
    height: 20px;
    margin-left: 10px;
    display: flex;
    align-items: center;
    gap: 3px;
    padding-left: 4px;
    background: #484848;
    border: 1px solid #5f5f5f;
    border-radius: 3px;
    color: #8c8c8c;
    font-size: 10.500px;
}

.winbtns {
    display: flex;
    align-self: flex-start;
    height: 18px;
    margin: 0 3px 0 9px;
    border: 1px solid #666;
    border-top: 0;
    border-radius: 0 0 3px 3px;
}

.winbtn {
    width: 27px;
    display: flex;
    align-items: center;
    justify-content: center;
    border-right: 1px solid #666;
}

.winbtn--wide {
    width: 47px;
    border-right: 0;
}

/* control bar */

.optionsbar {
    height: 33px;
    display: flex;
    align-items: center;
    background: #535353;
    border-bottom: 1px solid #3d3d3d;
    font-size: 10px;
}

.grip {
    width: 3px;
    height: 20px;
    margin-left: 5px;
    background: repeating-linear-gradient(#777 0 1px, transparent 1px 3px);
}

.opt-noselect {
    margin-left: 7px;
    width: 429px;
    color: #c4c4c4;
    font-weight: 600;
    white-space: nowrap;
}

.opt-brush {
    width: 70px;
    height: 20px;
    padding-right: 9px;
    background: #e4e4e4;
    color: #222;
    line-height: 21px;
    text-align: right;
    font-weight: 600;
    white-space: nowrap;
    overflow: hidden;
}

.opt-dd {
    width: 18px;
    height: 20px;
    display: flex;
    align-items: center;
    justify-content: center;
    border: 1px solid #626262;
    border-left: 0;
    border-radius: 0 2px 2px 0;
    color: #ddd;
}

.opt-label {
    margin-left: 7px;
    width: 37px;
    font-weight: 600;
    color: #ccc;
    border-bottom: 1px dotted #ccc;
    line-height: 12px;
    letter-spacing: -.4px;
    white-space: nowrap;
}

.opt-input {
    width: 51px;
    height: 20px;
    margin-left: 5px;
    padding-left: 4px;
    background: #484848;
    border: 1px solid #5c5c5c;
    border-radius: 2px 0 0 2px;
    line-height: 17px;
    color: #e0e0e0;
}

.opt-arrow {
    width: 18px;
    height: 20px;
    display: flex;
    align-items: center;
    justify-content: center;
    border: 1px solid #626262;
    border-left: 0;
}

.opt-style {
    width: 26px;
    margin-left: 6px;
    color: #aaa;
    font-weight: 600;
}

.opt-swatch {
    width: 19px;
    height: 20px;
    margin-left: 6px;
    background: #e6e6e6;
}

.opt-sep {
    width: 1px;
    height: 24px;
    margin: 0 6px;
    background: #464646;
}

.opt-btn {
    height: 19px;
    border: 1px solid #777;
    border-radius: 3px;
    color: #eee;
    font-weight: 600;
    line-height: 18px;
    text-align: center;
    white-space: nowrap;
}

.opt-btn--setup {
    width: 92px;
}

.opt-btn--prefs {
    width: 71px;
    margin-left: 6px;
}

.opt-transform {
    margin-left: 10px;
}

.opt-align {
    margin-right: 14px;
}

.opt-snap {
    margin-right: 5px;
}

.opt-dim {
    color: #707070;
    margin-right: 19px;
}

.opt-list {
    margin-right: 18px;
}

/* main row */

.workspace-row {
    flex: 1;
    display: flex;
    min-height: 0;
}

.strip {
    height: 13px;
    display: flex;
    align-items: center;
    padding-left: 7px;
    background: #434343;
    border-bottom: 1px solid #3a3a3a;
}

.strip--right {
    justify-content: flex-end;
    padding: 0 8px 0 0;
}

/* tools */

.toolbar {
    width: 73px;
    background: #535353;
    border-right: 1px solid #3d3d3d;
}

.tool-group {
    width: 39px;
    padding: 1px 0 2px;
    border-bottom: 1px solid #464646;
}

.strip + .tool-group {
    padding-top: 16px;
}

.tool {
    position: relative;
    height: 24.500px;
    display: flex;
    align-items: center;
    justify-content: center;
    margin-left: 2px;
}

.tool--active {
    width: 28px;
    height: 23px;
    margin-left: 7px;
    background: #383838;
    border-radius: 3px;
}

.tool--more::after {
    content: "";
    position: absolute;
    right: 5px;
    bottom: 2px;
    border-left: 3px solid transparent;
    border-bottom: 3px solid #bbb;
}

.fillstroke {
    position: relative;
    height: 61px;
}

.fill-box {
    position: absolute;
    left: 6px;
    top: 5px;
    width: 36px;
    height: 34px;
    background: #fff;
    border: 1px solid #333;
}

.stroke-box {
    position: absolute;
    left: 25px;
    top: 40px;
    width: 18px;
    height: 22px;
    background: #000;
    border: 1px solid #ddd;
}

.default-fs {
    position: absolute;
    left: 7px;
    top: 45px;
    width: 9px;
    height: 9px;
    background: #fff;
    border: 1px solid #222;
    box-shadow: 3px 3px 0 -1px #222;
}

.mode-row {
    display: flex;
    height: 20px;
    margin: 3px 0 0 6px;
    gap: 2px;
}

.mode-cell {
    width: 18px;
    display: flex;
    align-items: center;
    justify-content: center;
}

.mode-cell--on {
    background: #3a3a3a;
    border-radius: 2px;
}

.mode-white {
    width: 13px;
    height: 13px;
    background: #fff;
    border: 1px solid #111;
}

.mode-grad {
    width: 13px;
    height: 13px;
    background: linear-gradient(90deg, #fff, #222);
    border: 1px solid #111;
}

.screen-mode {
    margin: 10px 0 0 25px;
}

/* document */

.document {
    flex: none;
    width: 1362px;
    display: flex;
    flex-direction: column;
}

.doc-tabs {
    height: 21px;
    background: #434343;
    border-bottom: 1px solid #3a3a3a;
}

.doc-mid {
    flex: 1;
    display: flex;
    min-height: 0;
}

.canvas {
    flex: 1;
    background: #5f5f5f;
    padding: 25px 0 0 252px;
}

.artboards {
    display: grid;
    grid-template-columns: 677px 405px;
    grid-template-rows: 424px 424px;
    column-gap: 10px;
    row-gap: 9px;
}

.artboard {
    background: #fff;
    border: 1px solid #2a2a2a;
}

.vscroll {
    width: 17px;
    display: flex;
    flex-direction: column;
    align-items: center;
    padding: 6px 0;
    background: #535353;
    border-left: 1px solid #464646;
    border-right: 1px solid #3d3d3d;
    color: #aaa;
}

.vscroll__up {
    transform: scaleY(-1);
}

.vscroll__thumb {
    width: 12px;
    height: 24px;
    margin: 448px 0 auto;
    background: #696969;
    border-radius: 6px;
}

.statusbar {
    height: 17px;
    display: flex;
    align-items: center;
    background: #535353;
    border-top: 1px solid #484848;
    color: #ccc;
    font-size: 10px;
    margin-left: 4px;
}

.st-zoom {
    width: 50px;
    padding-left: 3px;
    height: 16px;
    line-height: 16px;
    background: #484848;
}

.st-dd {
    width: 16px;
    display: flex;
    justify-content: center;
    color: #ddd;
}

.st-nav {
    margin: 0 4px 0 10px;
}

.st-nav--dim {
    margin: 0 3px 0 7px;
}

.st-page {
    width: 40px;
    height: 16px;
    padding-left: 4px;
    line-height: 16px;
    background: #484848;
}

.st-label {
    width: 205px;
    margin-left: 3px;
    text-align: center;
    color: #bbb;
    background: #4c4c4c;
    height: 16px;
    line-height: 16px;
}

.st-play {
    margin-left: 5px;
}

.st-back {
    margin-left: 11px;
}

.hscroll {
    flex: 1;
    display: flex;
    padding-left: 401px;
}

.hscroll__thumb {
    width: 25px;
    height: 14px;
    background: #696969;
    border-radius: 7px;
}

.st-fwd {
    margin-right: 24px;
}

/* dock panels */

.dock {
    flex: none;
    display: flex;
    flex-direction: column;
    background: #535353;
    border-right: 1px solid #3d3d3d;
}

.dock--left {
    width: 233px;
}

.dock--right {
    width: 252px;
    border-right: 0;
}

.panel {
    border-bottom: 2px solid #3e3e3e;
}

.tabs {
    height: 17px;
    display: flex;
    align-items: stretch;
    background: #434343;
    border-bottom: 1px solid #3a3a3a;
}

.tabs__menu {
    margin: 4px 6px 0 auto;
    color: #d0d0d0;
}

.tab {
    display: flex;
    align-items: center;
    justify-content: center;
    height: 17px;
    border-right: 1px solid #3a3a3a;
    color: #a8a8a8;
    font-size: 10px;
    font-weight: 600;
    white-space: nowrap;
    overflow: hidden;
}

.tab--on {
    background: #535353;
    color: #f0f0f0;
}

.tab__updown {
    margin-right: 3px;
    color: #b0b0b0;
}

.tab--color { width: 47px; }
.tab--guide { width: 70px; }
.tab--gradient { width: 60px; }
.tab--pf { width: 65px; }
.tab--al { width: 39px; }
.tab--tr { width: 63px; }
.tab--ch { width: 61px; }
.tab--pa { width: 67px; }
.tab--ot { width: 62px; }
.tab--pr { width: 41px; justify-content: flex-start; padding-left: 7px; }
.tab--ly { width: 36px; justify-content: flex-start; padding-left: 5px; }
.tab--li { width: 54px; }
.tab--ab { width: 40px; justify-content: flex-start; padding-left: 6px; }
.tab--as { width: 40px; justify-content: flex-start; padding-left: 6px; }

/* color panel */

.panel--color {
    height: 353px;
}

.color-top {
    height: 33px;
    display: flex;
    align-items: center;
    padding-left: 6px;
}

.swatch-set {
    display: flex;
    border: 1px solid #222;
}

.sw {
    width: 13px;
    height: 12px;
}

.sw--none {
    background: linear-gradient(135deg, #fff 42%, #e8101a 42% 58%, #fff 58%);
    transform: scaleX(-1);
}

.sw--black {
    background: #000;
}

.sw--white {
    background: #fff;
}

.hash {
    margin-left: 99px;
    color: #aaa;
    font-size: 10px;
    font-weight: 600;
}

.hex {
    width: 60px;
    height: 20px;
    margin-left: 3px;
    padding-left: 6px;
    background: #484848;
    border: 1px solid #5c5c5c;
    border-radius: 2px;
    color: #eee;
    line-height: 18px;
    font-size: 10.500px;
}

.spectrum {
    width: 208px;
    height: 294px;
    margin-left: 7px;
    border: 1px solid #2c2c2c;
    background:
        linear-gradient(to bottom, #fff 0, rgba(255, 255, 255, 0) 50%, rgba(0, 0, 0, 0) 50%, #000 100%),
        linear-gradient(to right, #f00, #ff0 17%, #0f0 33%, #0ff 50%, #00f 67%, #f0f 83%, #f00);
}

/* gradient panel */

.panel--gradient {
    height: 449px;
}

.grad-top {
    display: flex;
    padding: 6px 0 0 6px;
    height: 119px;
}

.grad-left {
    width: 85px;
}

.grad-preview-row {
    display: flex;
    align-items: flex-end;
    gap: 3px;
}

.grad-preview {
    width: 32px;
    height: 31px;
    border: 1px solid #ddd;
    background: linear-gradient(90deg, #fff, #222);
    box-shadow: 0 0 0 1px #333;
}

.grad-caret {
    margin-bottom: 14px;
    border-left: 3px solid transparent;
    border-right: 3px solid transparent;
    border-top: 3px solid #ccc;
}

.grad-fs {
    position: relative;
    height: 30px;
    margin-top: 5px;
}

.grad-fs__fill {
    position: absolute;
    left: 1px;
    top: 0;
    width: 20px;
    height: 20px;
    background: #fff;
    border: 1px solid #444;
}

.grad-fs__stroke {
    position: absolute;
    left: 12px;
    top: 10px;
    width: 19px;
    height: 19px;
    background: #000;
    border: 1px solid #fff;
    outline: 1px solid #000;
}

.grad-fs__stroke::after {
    content: "";
    position: absolute;
    right: 3px;
    bottom: 3px;
    width: 9px;
    height: 9px;
    background: #555;
    border: 1px solid #fff;
}

.grad-swap {
    margin: 12px 0 0 8px;
}

.grad-form {
    width: 134px;
}

.grad-row {
    display: flex;
    align-items: center;
    height: 26px;
    gap: 3px;
    margin-left: -43px;
    width: 177px;
}

.grad-row--type {
    height: 21px;
    margin-bottom: 4px;
}

.grad-row--stroke {
    height: 23px;
    margin-bottom: 2px;
}

.grad-label {
    width: 40px;
    text-align: right;
    font-size: 9.500px;
    font-weight: 600;
    color: #767676;
}

.grad-label--on {
    color: #c8c8c8;
}

.grad-ico {
    margin-left: 22px;
}

.grad-select {
    width: 134px;
    height: 20px;
    display: flex;
    align-items: center;
    justify-content: flex-end;
    padding-right: 5px;
    border: 1px solid #636363;
    border-radius: 3px;
    color: #ddd;
}

.grad-strokes {
    display: flex;
    border: 1px solid #5e5e5e;
    border-radius: 2px;
}

.grad-strokes i {
    width: 22px;
    height: 20px;
    display: flex;
    align-items: center;
    justify-content: center;
    border-right: 1px solid #5e5e5e;
}

.grad-field {
    width: 70px;
    height: 21px;
    display: flex;
    align-items: center;
    justify-content: flex-end;
    padding-right: 7px;
    background: #5b5b5b;
    color: #767676;
}

.ramp-row {
    display: flex;
    padding: 0 0 0 12px;
    height: 235px;
}

.ramp {
    width: 183px;
    height: 234px;
    border: 1px solid #3c3c3c;
    background: linear-gradient(90deg, #fff, #221e1f);
}

.ramp-trash {
    margin: 5px 0 0 12px;
}

.grad-bottom {
    padding: 22px 0 0 48px;
}

.grad-bottom .grad-row {
    width: auto;
    margin-left: 0;
}

/* pathfinder */

.panel--path {
    height: 124px;
}

.path-title {
    padding: 7px 0 0 7px;
    height: 24px;
    font-size: 9.500px;
    font-weight: 600;
    color: #c8c8c8;
}

.path-title--two {
    height: 22px;
    padding-top: 6px;
}

.path-icons {
    display: flex;
    align-items: center;
    height: 26px;
}

.path-icons--shape {
    padding-left: 12px;
    gap: 23px;
}

.path-icons--finders {
    padding-left: 14px;
    gap: 23.500px;
    height: 28px;
}

.expand {
    width: 71px;
    height: 19px;
    margin-left: -5px;
    text-align: center;
    line-height: 19px;
    background: #585858;
    color: #6f6f6f;
    font-weight: 600;
}

/* paragraph */

.panel--para {
    height: 175px;
}

.aligns {
    display: flex;
    align-items: center;
    height: 38px;
    margin: 0 5px;
    border-bottom: 2px solid #4a4a4a;
    gap: 11px;
    color: #d6d6d6;
    padding-left: 4px;
}

.align {
    width: 24px;
    height: 24px;
    display: flex;
    align-items: center;
    justify-content: center;
}

.align--on {
    background: #333;
    border-radius: 3px;
}

.para-fields {
    display: grid;
    grid-template-columns: 136px 109px;
    margin: 0 5px;
    padding-top: 6px;
    row-gap: 5px;
}

.para-fields--indent {
    height: 60px;
    border-bottom: 2px solid #4a4a4a;
}

.para-fields--space {
    height: 33px;
    border-bottom: 2px solid #4a4a4a;
}

.pfield {
    display: flex;
    align-items: center;
    height: 20px;
}

.pfield__ico {
    margin-right: 5px;
    margin-left: 1px;
}

.spinner {
    width: 18px;
    height: 20px;
    display: flex;
    align-items: center;
    justify-content: center;
    background: #484848;
    border: 1px solid #5c5c5c;
    border-radius: 2px 0 0 2px;
    color: #ddd;
}

.pfield__val {
    width: 64px;
    height: 20px;
    padding-left: 3px;
    background: #484848;
    border: 1px solid #5c5c5c;
    border-left: 0;
    border-radius: 0 2px 2px 0;
    color: #eee;
    line-height: 18px;
    font-size: 10px;
}

.hyphenate {
    display: flex;
    align-items: center;
    height: 25px;
    gap: 4px;
    padding-left: 6px;
    color: #eee;
    font-size: 10px;
    font-weight: 600;
}

.checkbox {
    width: 12px;
    height: 12px;
    display: flex;
    align-items: center;
    justify-content: center;
    background: #c2c2c2;
    border-radius: 2px;
}

/* libraries */

.panel--lib {
    flex: 1;
    border-bottom: 0;
}

.lib {
    width: 168px;
}

.lib-search {
    height: 28px;
    margin: 0 7px;
    padding-top: 6px;
    display: flex;
    align-items: center;
    justify-content: space-between;
    border-bottom: 1px solid #666;
    color: #7a7a7a;
    font-size: 11px;
    font-style: italic;
}

.lib-search span {
    flex: 1;
    margin-left: 5px;
    white-space: nowrap;
    overflow: hidden;
}

.lib-search svg:last-child {
    margin-left: 6px;
    margin-right: 3px;
}

.lib-select {
    height: 18px;
    margin: 9px 7px 0;
    display: flex;
    align-items: center;
    justify-content: flex-end;
    padding-right: 7px;
    background: #4d4d4d;
    border: 1px solid #5a5a5a;
    border-radius: 2px;
    color: #757575;
}

.lib-view {
    display: flex;
    align-items: center;
    height: 34px;
    padding-left: 8px;
    color: #e4e4e4;
    font-size: 10px;
    font-weight: 600;
}

.lib-view__label {
    width: 72px;
    white-space: nowrap;
}

.lib-view__chev {
    color: #aaa;
    margin-right: 31px;
}

.lib-view__grid {
    width: 18px;
    height: 18px;
    margin-right: 6px;
    display: flex;
    align-items: center;
    justify-content: center;
    background: #363636;
    border-radius: 2px;
}

.lib-body {
    height: 316px;
    padding-top: 127px;
    background: #4b4b4b;
    border-top: 1px solid #484848;
    border-bottom: 1px solid #424242;
}

.lib-cloud {
    margin: 0 auto;
}

.lib-msg {
    margin: 5px 0 0;
    color: #a0a0a0;
    font-size: 10.500px;
    line-height: 15px;
    text-align: center;
    white-space: nowrap;
}

.lib-foot {
    display: flex;
    align-items: center;
    justify-content: flex-end;
    height: 26px;
    gap: 4px;
    padding-right: 21px;
    color: #eee;
    font-size: 9px;
}

.lib-trash {
    margin-left: 9px;
}

/* windows taskbar */

.taskbar {
    height: 40px;
    display: flex;
    align-items: stretch;
    background: linear-gradient(90deg, #0b0b0b 0, #0b0b0b 700px, #26131a 800px, #2a141b 880px, #120c0f 1000px, #0b0b0b 1200px);
    border-top: 1px solid #222;
}

.tb {
    width: 49px;
    display: flex;
    align-items: center;
    justify-content: center;
    position: relative;
}

.tb > svg {
    height: 22px;
    width: auto;
}

.tb--sys {
    width: 48px;
}

.tb--sys > svg {
    height: 18px;
}

.tb--first {
    margin-left: 2px;
}

.tb--run::after,
.tb--active::after {
    content: "";
    position: absolute;
    left: 4px;
    right: 4px;
    bottom: 0;
    height: 2px;
    background: #75c0c8;
}

.tb--active {
    background: #4a3e42;
}

.tb--active::after {
    left: 0;
    right: 0;
}

.tb__spacer {
    flex: 1;
}

.app-sq {
    width: 20px;
    height: 20px;
    display: flex;
    align-items: center;
    justify-content: center;
    border: 1px solid;
    font-size: 12px;
}

.app-sq--ps {
    color: #31a8ff;
    background: #001e36;
}

.app-sq--pr {
    color: #d38fff;
    background: #1f0a2e;
}

.app-sq--ai {
    color: #ff8a1e;
    background: #2c1300;
}

.chrome {
    width: 22px;
    height: 22px;
    display: flex;
    align-items: center;
    justify-content: center;
    border-radius: 50%;
    background: conic-gradient(#e0443a 0 120deg, #fbc02d 120deg 210deg, #3aa757 210deg 300deg, #e0443a 300deg);
}

.chrome i {
    width: 11px;
    height: 11px;
    border-radius: 50%;
    background: #4285f4;
    border: 2px solid #fff;
}

.tray {
    display: flex;
    align-items: center;
    color: #e2e2e2;
    font-size: 11.500px;
    line-height: 17px;
}

.tray__people { margin-right: 22px; }
.tray__up { margin-right: 12px; }
.tray__batt { margin-right: 11px; }
.tray__wifi { margin-right: 7px; }
.tray__vol { margin-right: 7px; }
.tray__drop { margin-right: 6px; }

.tray__lang {
    width: 32px;
    text-align: center;
    margin-right: 6px;
}

.tray__clock {
    width: 62px;
    text-align: center;
}

.tray__note {
    position: relative;
    margin: 0 24px 0 12px;
}

.tray__badge {
    position: absolute;
    left: 7px;
    top: 5px;
    width: 16px;
    height: 16px;
    border-radius: 50%;
    background: #555;
    color: #fff;
    font-size: 11px;
    font-weight: 600;
    line-height: 16px;
    text-align: center;
}

/* file menu */

.file-menu {
    position: absolute;
    left: 39px;
    top: 24px;
    width: 424px;
    height: 768px;
    padding: 3px 3px 0 0;
    background: #f2f2f2;
    border: 1px solid #a8a8a8;
    box-shadow: 2px 2px 3px rgba(0, 0, 0, .45);
    color: #000;
    font-size: 16.700px;
}

.mi {
    height: 31px;
    display: flex;
    align-items: center;
    justify-content: space-between;
    padding: 0 22px 0 43px;
    white-space: nowrap;
}

.mi__key {
    letter-spacing: .4px;
}

.mi--off {
    color: #7a7a7a;
}

.mi__arrow {
    margin-right: -13px;
}

.msep {
    height: 1px;
    margin: 3px 0 3px 39px;
    border: 0;
    background: #d4d4d4;
}
```
